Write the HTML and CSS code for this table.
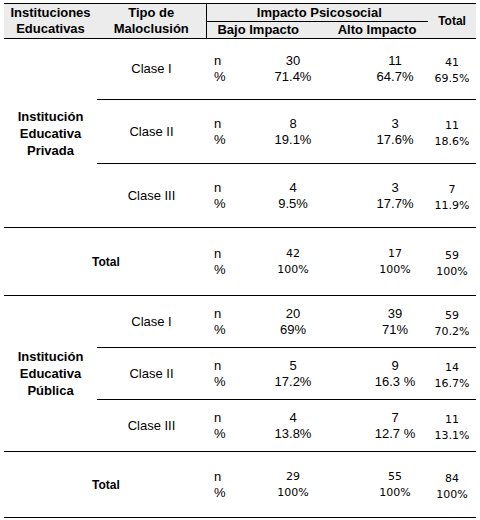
FILE: index.html
```html
<!DOCTYPE html>
<html lang="es">
<head>
    <meta charset="UTF-8">
    <meta name="viewport" content="width=device-width, initial-scale=1.0">
    <title>Impacto Psicosocial</title>
    <link rel="stylesheet" href="styles.css">
</head>
<body>

    <table class="stats-table">
        <colgroup>
            <col class="col-inst">
            <col class="col-tipo">
            <col class="col-np">
            <col class="col-bajo">
            <col class="col-alto">
            <col class="col-total">
        </colgroup>
        <thead>
            <tr class="head-top">
                <th rowspan="2">Instituciones<br>Educativas</th>
                <th rowspan="2">Tipo de<br>Maloclusión</th>
                <th colspan="3" class="impact-head">Impacto Psicosocial</th>
                <th rowspan="2" class="total-head">Total</th>
            </tr>
            <tr class="head-sub">
                <th colspan="2" class="bajo-head">Bajo Impacto</th>
                <th class="alto-head">Alto Impacto</th>
            </tr>
        </thead>
        <tbody>
            <!-- Institución privada -->
            <tr class="row-first">
                <th rowspan="3" class="inst-cell">Institución<br>Educativa<br>Privada</th>
                <td class="sep">Clase I</td>
                <td class="sep np">n<br>%</td>
                <td class="sep bajo">30<br>71.4%</td>
                <td class="sep alto">11<br>64.7%</td>
                <td class="sep total">41<br>69.5%</td>
            </tr>
            <tr class="row-mid">
                <td class="sep">Clase II</td>
                <td class="sep np">n<br>%</td>
                <td class="sep bajo">8<br>19.1%</td>
                <td class="sep alto">3<br>17.6%</td>
                <td class="sep total">11<br>18.6%</td>
            </tr>
            <tr class="row-mid group-end">
                <td>Clase III</td>
                <td class="np">n<br>%</td>
                <td class="bajo">4<br>9.5%</td>
                <td class="alto">3<br>17.7%</td>
                <td class="total">7<br>11.9%</td>
            </tr>
            <tr class="row-total group-end">
                <th colspan="2" class="total-label">Total</th>
                <td class="np">n<br>%</td>
                <td class="bajo alt-font">42<br>100%</td>
                <td class="alto alt-font">17<br>100%</td>
                <td class="total">59<br>100%</td>
            </tr>

            <!-- Institución pública -->
            <tr class="row-pub">
                <th rowspan="3" class="inst-cell">Institución<br>Educativa<br>Pública</th>
                <td class="sep">Clase I</td>
                <td class="sep np">n<br>%</td>
                <td class="sep bajo">20<br>69%</td>
                <td class="sep alto">39<br>71%</td>
                <td class="sep total">59<br>70.2%</td>
            </tr>
            <tr class="row-pub">
                <td class="sep">Clase II</td>
                <td class="sep np">n<br>%</td>
                <td class="sep bajo">5<br>17.2%</td>
                <td class="sep alto">9<br>16.3 %</td>
                <td class="sep total">14<br>16.7%</td>
            </tr>
            <tr class="row-pub group-end">
                <td>Clase III</td>
                <td class="np">n<br>%</td>
                <td class="bajo">4<br>13.8%</td>
                <td class="alto">7<br>12.7 %</td>
                <td class="total">11<br>13.1%</td>
            </tr>
            <tr class="row-total2 group-end">
                <th colspan="2" class="total-label">Total</th>
                <td class="np">n<br>%</td>
                <td class="bajo alt-font">29<br>100%</td>
                <td class="alto alt-font">55<br>100%</td>
                <td class="total">84<br>100%</td>
            </tr>
        </tbody>
    </table>

</body>
</html>
```

FILE: styles.css
```css
body {
    margin: 0;
    padding: 3px 4px;
    font-family: "Liberation Sans", Arial, sans-serif;
    font-size: 13px;
    color: #000;
    background-color: #fff;
}

.stats-table {
    border-collapse: collapse;
    table-layout: fixed;
    width: 472px;
    border-top: 1px solid #000;
}

.col-inst { width: 93px; }
.col-tipo { width: 109px; }
.col-np { width: 44px; }
.col-bajo { width: 86px; }
.col-alto { width: 92px; }
.col-total { width: 48px; }

.stats-table th,
.stats-table td {
    padding: 0;
    line-height: 16px;
    text-align: center;
    vertical-align: middle;
}

.stats-table th {
    font-weight: bold;
}

/* encabezado */
.stats-table thead th {
    background-color: #ececec;
    white-space: nowrap;
}

.head-top { height: 18px; }
.head-sub { height: 17px; }

.head-sub th,
.stats-table thead th[rowspan="2"] {
    border-bottom: 1px solid #000;
}

.impact-head {
    border-left: 1px solid #000;
    border-bottom: 1px solid #000;
    padding-left: 4px !important;
}

.bajo-head {
    border-left: 1px solid #000;
    padding-right: 26px !important;
}

.alto-head {
    padding-right: 10px !important;
}

.total-head {
    font-size: 12px;
}

/* filas */
.row-first { height: 61px; }
.row-mid { height: 64px; }
.row-total { height: 68px; }
.row-pub { height: 52px; }
.row-total2 { height: 66px; }

.sep {
    border-bottom: 1px solid #000;
}

.group-end td,
.group-end th,
.inst-cell {
    border-bottom: 1px solid #000;
}

.inst-cell {
    line-height: 17px !important;
}

.np {
    text-align: left !important;
    padding-left: 8px !important;
}

.alto {
    padding-left: 26px !important;
}

.total,
.alt-font {
    font-family: "DejaVu Sans", sans-serif;
    font-size: 11px;
}

.total {
    padding-top: 4px !important;
}

.total-label {
    font-size: 12px;
    text-align: left !important;
    padding-left: 88px !important;
}
```
